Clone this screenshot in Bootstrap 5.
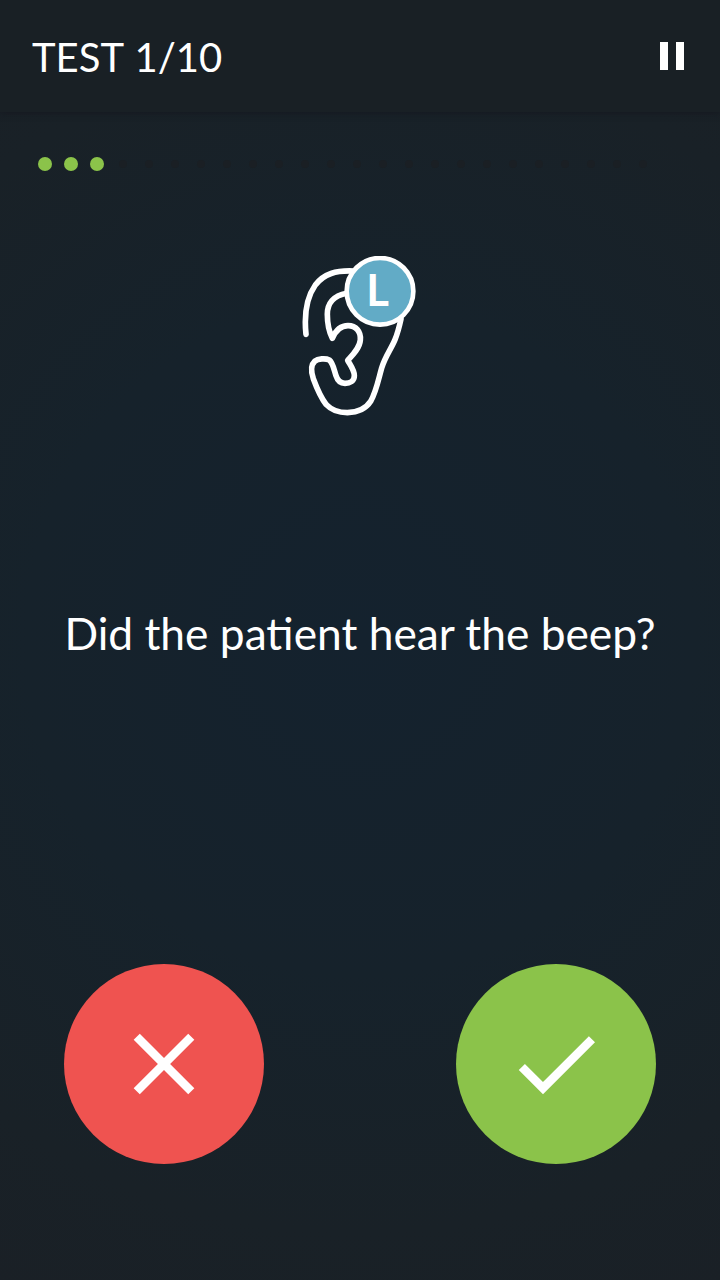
<!DOCTYPE html>
<html lang="en">
<head>
<meta charset="utf-8">
<meta name="viewport" content="width=device-width, initial-scale=1">
<title>Hearing test</title>
<link href="https://cdn.jsdelivr.net/npm/bootstrap@5.3.0/dist/css/bootstrap.min.css" rel="stylesheet">
<style>
body{font-family:Lato,sans-serif;color:#fff;background:#192025}
.screen{height:1280px;background:radial-gradient(circle 740px at 50% 640px,#14222e 0%,#16222b 45%,#192127 80%,#1a2026 100%)}
.topbar{height:112px;background:#192025;box-shadow:0 1px 6px rgba(20,22,30,.7);padding:0 24px 0 32px}
.title{font-size:40px;line-height:48px;font-weight:400;word-spacing:1.5px;padding-top:2px}
.plain{border:0;background:none;padding:0;color:#fff}
.steps{padding:45px 38px 0;gap:12px}
.step{flex:none;width:14px;height:14px;border-radius:50%;border:3px solid transparent;background:#1a1f24 padding-box}
.step.done{border:0;background:#8bc34a}
.ear{margin-top:85px}
.question{font-size:44.3px;line-height:54px;margin-top:190px}
.answers{margin-top:304px;padding:0 64px}
.answer{width:200px;height:200px;border:0;color:#fff;padding:0}
.no{background:#ef5350}
.yes{background:#8bc34a}
</style>
</head>
<body>
<main class="screen d-flex flex-column overflow-hidden">
  <header class="topbar d-flex flex-shrink-0 align-items-center justify-content-between">
    <h1 class="title m-0">TEST 1/10</h1>
    <button class="plain d-flex" aria-label="Pause"><svg width="48" height="48" viewBox="0 0 24 24" fill="currentColor"><path d="M6 19h4V5H6v14zm8-14v14h4V5h-4z"/></svg></button>
  </header>
  <div class="steps d-flex">
    <span class="step done"></span><span class="step done"></span><span class="step done"></span>
    <span class="step"></span><span class="step"></span><span class="step"></span><span class="step"></span><span class="step"></span><span class="step"></span><span class="step"></span>
    <span class="step"></span><span class="step"></span><span class="step"></span><span class="step"></span><span class="step"></span><span class="step"></span><span class="step"></span>
    <span class="step"></span><span class="step"></span><span class="step"></span><span class="step"></span><span class="step"></span><span class="step"></span><span class="step"></span>
  </div>
  <div class="ear d-flex justify-content-center">
    <svg width="120" height="160" viewBox="30 33 360 480" fill="none" stroke="#fff" stroke-width="17" stroke-linecap="round" stroke-linejoin="round">
      <path d="M48 268C42 210 48 160 76 120C102 86 138 76 190 78"/>
      <path d="M170 145C130 152 112 176 112 208C112 238 118 262 127 280C138 254 156 242 174 242C198 242 213 260 211 285C209 310 188 330 173 346C182 362 193 376 193 392C193 408 180 415 165 415C151 415 143 408 138 392C132 374 129 354 118 345C106 339 84 341 74 349C62 360 63 380 70 401C81 431 95 461 109 479C124 495 146 503 172 503C202 502 228 491 242 469C258 442 265 405 275 369C285 335 303 313 315 284C324 262 329 240 333 222"/>
      <circle cx="270" cy="139" r="100" fill="#62abc6" stroke-width="14"/>
      <text x="229" y="183" font-size="131" font-weight="700" font-family="Lato,sans-serif" fill="#fff" stroke="none">L</text>
    </svg>
  </div>
  <p class="question mb-0 text-center text-nowrap">Did the patient hear the beep?</p>
  <div class="answers d-flex justify-content-between">
    <button class="answer no rounded-circle d-flex align-items-center justify-content-center" aria-label="No"><svg width="104" height="104" viewBox="0 0 24 24" fill="currentColor"><path d="M19 6.41L17.59 5 12 10.59 6.41 5 5 6.41 10.59 12 5 17.59 6.41 19 12 13.41 17.59 19 19 17.59 13.41 12z"/></svg></button>
    <button class="answer yes rounded-circle d-flex align-items-center justify-content-center" aria-label="Yes"><svg width="104" height="104" viewBox="0 0 24 24" fill="currentColor"><path d="M9 16.17L4.83 12l-1.42 1.41L9 19 21 7l-1.41-1.41z"/></svg></button>
  </div>
</main>
<script src="https://cdn.jsdelivr.net/npm/bootstrap@5.3.0/dist/js/bootstrap.bundle.min.js"></script>
</body>
</html>
